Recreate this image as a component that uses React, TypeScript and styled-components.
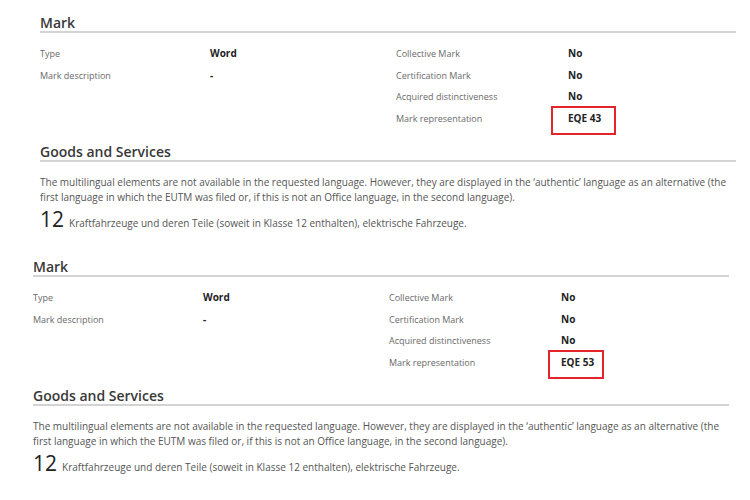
import styled, { createGlobalStyle } from 'styled-components';

const GlobalStyle = createGlobalStyle`
  html, body {
    margin: 0;
    padding: 0;
    background: #ffffff;
  }
  body {
    font-family: 'Open Sans', 'Noto Sans', Arial, sans-serif;
    color: #333;
  }
`;

type Frame = { left: number; right: number };
type Detail = { label: string; value: string; frame?: Frame };

type Trademark = {
  indent: number;
  type: string;
  description: string;
  flags: Detail[];
  niceClass: string;
  goods: string;
};

const notice =
  "The multilingual elements are not available in the requested language. However, they are displayed in the \u2018authentic\u2019 language as an alternative (the first language in which the EUTM was filed or, if this is not an Office language, in the second language).";

const goods = 'Kraftfahrzeuge und deren Teile (soweit in Klasse 12 enthalten), elektrische Fahrzeuge.';

const marks: Trademark[] = [
  {
    indent: 40,
    type: 'Word',
    description: '-',
    flags: [
      { label: 'Collective Mark', value: 'No' },
      { label: 'Certification Mark', value: 'No' },
      { label: 'Acquired distinctiveness', value: 'No' },
      { label: 'Mark representation', value: 'EQE 43', frame: { left: 17, right: 15 } },
    ],
    niceClass: '12',
    goods,
  },
  {
    indent: 33,
    type: 'Word',
    description: '-',
    flags: [
      { label: 'Collective Mark', value: 'No' },
      { label: 'Certification Mark', value: 'No' },
      { label: 'Acquired distinctiveness', value: 'No' },
      { label: 'Mark representation', value: 'EQE 53', frame: { left: 13, right: 10 } },
    ],
    niceClass: '12',
    goods,
  },
];

function DetailColumn({ items, labelWidth }: { items: Detail[]; labelWidth: number }) {
  return (
    <DetailList $labelWidth={labelWidth}>
      {items.map((item) => (
        <DetailRow key={item.label}>
          <Label>{item.label}</Label>
          <Value>
            {item.frame ? (
              <Highlighted $left={item.frame.left} $right={item.frame.right}>
                {item.value}
              </Highlighted>
            ) : (
              item.value
            )}
          </Value>
        </DetailRow>
      ))}
    </DetailList>
  );
}

function MarkSection({ mark }: { mark: Trademark }) {
  return (
    <Section $indent={mark.indent}>
      <SectionTitle>Mark</SectionTitle>
      <MarkGrid>
        <DetailColumn
          labelWidth={170}
          items={[
            { label: 'Type', value: mark.type },
            { label: 'Mark description', value: mark.description },
          ]}
        />
        <DetailColumn labelWidth={172} items={mark.flags} />
      </MarkGrid>

      <GoodsTitle>Goods and Services</GoodsTitle>
      <Notice>{notice}</Notice>
      <ClassLine>
        <ClassNumber>{mark.niceClass}</ClassNumber>
        <ClassText>{mark.goods}</ClassText>
      </ClassLine>
    </Section>
  );
}

export default function App() {
  return (
    <>
      <GlobalStyle />
      <Page>
        {marks.map((mark) => (
          <MarkSection key={mark.flags[3].value} mark={mark} />
        ))}
      </Page>
    </>
  );
}

const Page = styled.main`
  width: 750px;
  height: 500px;
  overflow: hidden;
  box-sizing: border-box;
  padding-top: 14px;
  background: #fff;
`;

const Section = styled.section<{ $indent: number }>`
  margin-left: ${(p) => p.$indent}px;
  width: 696px;

  & + & {
    margin-top: 27.5px;
  }
`;

const SectionTitle = styled.h2`
  margin: 0;
  font-size: 14px;
  line-height: 17px;
  font-weight: 600;
  color: #383838;
  border-bottom: 2px solid #d3d3d3;
`;

const GoodsTitle = styled(SectionTitle)`
  margin-top: 13.5px;
`;

const MarkGrid = styled.div`
  display: grid;
  grid-template-columns: 356px 1fr;
  margin-top: 10px;
`;

const DetailList = styled.dl<{ $labelWidth: number }>`
  margin: 0;
  display: grid;
  grid-template-columns: ${(p) => p.$labelWidth}px 1fr;
  align-content: start;
`;

const DetailRow = styled.div`
  display: contents;
`;

const Label = styled.dt`
  font-size: 9px;
  line-height: 21.5px;
  color: #6a6a6a;
`;

const Value = styled.dd`
  margin: 0;
  font-size: 10px;
  line-height: 21.5px;
  font-weight: 700;
  color: #222;
`;

const Highlighted = styled.span<{ $left: number; $right: number }>`
  position: relative;
  display: inline-block;

  &::after {
    content: '';
    position: absolute;
    left: -${(p) => p.$left}px;
    right: -${(p) => p.$right}px;
    top: -2px;
    bottom: -6px;
    border: 2px solid #e3242b;
  }
`;

const Notice = styled.p`
  margin: 13px 0 0;
  font-size: 10px;
  line-height: 15px;
  color: #555;
`;

const ClassLine = styled.div`
  display: flex;
  align-items: baseline;
  gap: 5px;
  margin-top: 2px;
`;

const ClassNumber = styled.span`
  font-size: 21px;
  line-height: 24px;
  color: #222;
`;

const ClassText = styled.span`
  font-size: 10px;
  color: #555;
`;
